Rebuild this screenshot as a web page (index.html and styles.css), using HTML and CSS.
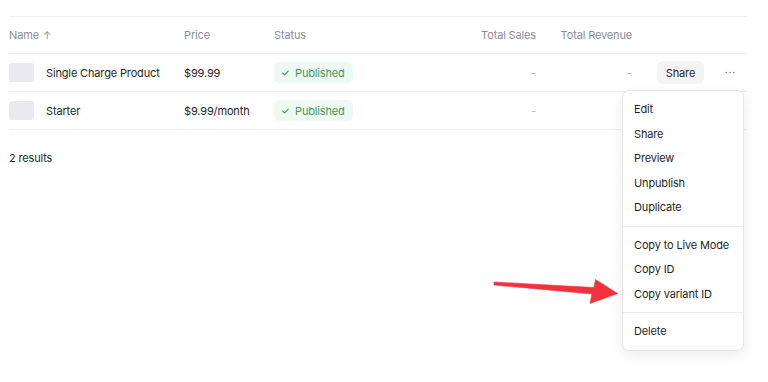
FILE: index.html
```html
<!DOCTYPE html>
<html lang="en">
<head>
    <meta charset="UTF-8">
    <meta name="viewport" content="width=device-width, initial-scale=1.0">
    <title>Products</title>
    <link rel="stylesheet" href="styles.css">
</head>
<body>
    <div class="page">
        <div class="table">
            <div class="row head">
                <div class="cell">Name <span class="sort">&#8593;</span></div>
                <div class="cell">Price</div>
                <div class="cell">Status</div>
                <div class="cell num">Total Sales</div>
                <div class="cell num">Total Revenue</div>
                <div class="cell"></div>
                <div class="cell"></div>
            </div>
            <div class="row">
                <div class="cell name"><span class="thumb"></span>Single Charge Product</div>
                <div class="cell">$99.99</div>
                <div class="cell">
                    <span class="badge">
                        <svg width="7" height="6" viewBox="0 0 7 6"><path d="M0.8 3.2 L2.6 4.9 L6.2 1.1" fill="none" stroke="#3f9a63" stroke-width="1.2" stroke-linecap="round" stroke-linejoin="round"/></svg>
                        Published
                    </span>
                </div>
                <div class="cell num dash">-</div>
                <div class="cell num dash">-</div>
                <div class="cell share-cell"><button class="share">Share</button></div>
                <div class="cell more">
                    <svg width="10" height="3" viewBox="0 0 10 3"><circle cx="1.2" cy="1.5" r="0.8" fill="#777"/><circle cx="5" cy="1.5" r="0.8" fill="#777"/><circle cx="8.8" cy="1.5" r="0.8" fill="#777"/></svg>
                </div>
            </div>
            <div class="row">
                <div class="cell name"><span class="thumb"></span>Starter</div>
                <div class="cell">$9.99/month</div>
                <div class="cell">
                    <span class="badge">
                        <svg width="7" height="6" viewBox="0 0 7 6"><path d="M0.8 3.2 L2.6 4.9 L6.2 1.1" fill="none" stroke="#3f9a63" stroke-width="1.2" stroke-linecap="round" stroke-linejoin="round"/></svg>
                        Published
                    </span>
                </div>
                <div class="cell num dash">-</div>
                <div class="cell num dash">-</div>
                <div class="cell"></div>
                <div class="cell"></div>
            </div>
        </div>
        <div class="results">2 results</div>
    </div>

    <div class="menu">
        <div class="item">Edit</div>
        <div class="item">Share</div>
        <div class="item">Preview</div>
        <div class="item">Unpublish</div>
        <div class="item">Duplicate</div>
        <div class="sep"></div>
        <div class="item">Copy to Live Mode</div>
        <div class="item">Copy ID</div>
        <div class="item">Copy variant ID</div>
        <div class="sep"></div>
        <div class="item">Delete</div>
    </div>

    <svg class="arrow" width="130" height="30" viewBox="490 277 130 30">
        <path d="M494 282 L594 287.5 L595.5 279.5 L617.5 293.5 L590 303.5 L592 294 L494 285 Z" fill="#f1313c" stroke="#f1313c" stroke-width="0.6" stroke-linejoin="round"/>
    </svg>
</body>
</html>
```

FILE: styles.css
```css
body {
    margin: 0;
    font-family: Inter, "Noto Sans", sans-serif;
    font-size: 11px;
    letter-spacing: -0.15px;
    color: #1f1f25;
    background: #fff;
}
.page {
    padding: 16px 0 0 9px;
    width: 738px;
}
.table {
    border-top: 1px solid #eeeef1;
}
.row {
    display: grid;
    grid-template-columns: 175px 90px 172px 90px 96px 72px 43px;
    height: 37px;
    align-items: center;
    border-bottom: 1px solid #eeeef1;
}
.row.head {
    height: 36px;
    color: #8c8c9c;
}
.cell {
    display: flex;
    align-items: center;
    white-space: nowrap;
}
.num {
    justify-content: flex-end;
}
.dash {
    color: #b8b8c2;
}
.sort {
    margin-left: 4px;
    font-size: 10px;
}
.thumb {
    width: 25px;
    height: 19px;
    border-radius: 3px;
    background: #e9e9ee;
    margin-right: 12px;
}
.badge {
    display: inline-flex;
    align-items: center;
    gap: 6px;
    height: 21px;
    padding: 0 8px;
    border-radius: 5px;
    background: #edf9f1;
    color: #3f9a63;
}
.share-cell {
    justify-content: flex-end;
}
.share {
    font-family: inherit;
    font-size: 11px;
    letter-spacing: inherit;
    color: #1f1f25;
    background: #f4f4f6;
    border: none;
    border-radius: 6px;
    height: 23px;
    width: 47px;
    padding: 0;
}
.more {
    justify-content: flex-end;
    padding-right: 12px;
}
.results {
    margin-top: 21px;
}
.menu {
    position: absolute;
    left: 622px;
    top: 90px;
    width: 120px;
    padding: 6px 0;
    background: #fff;
    border: 1px solid #e6e6ea;
    border-radius: 7px;
    box-shadow: 0 4px 14px rgba(0, 0, 0, 0.08);
}
.item {
    height: 24.5px;
    line-height: 24.5px;
    padding-left: 11px;
}
.sep {
    height: 1px;
    background: #ededf0;
    margin: 6px 0;
}
.arrow {
    position: absolute;
    left: 490px;
    top: 277px;
}
```
